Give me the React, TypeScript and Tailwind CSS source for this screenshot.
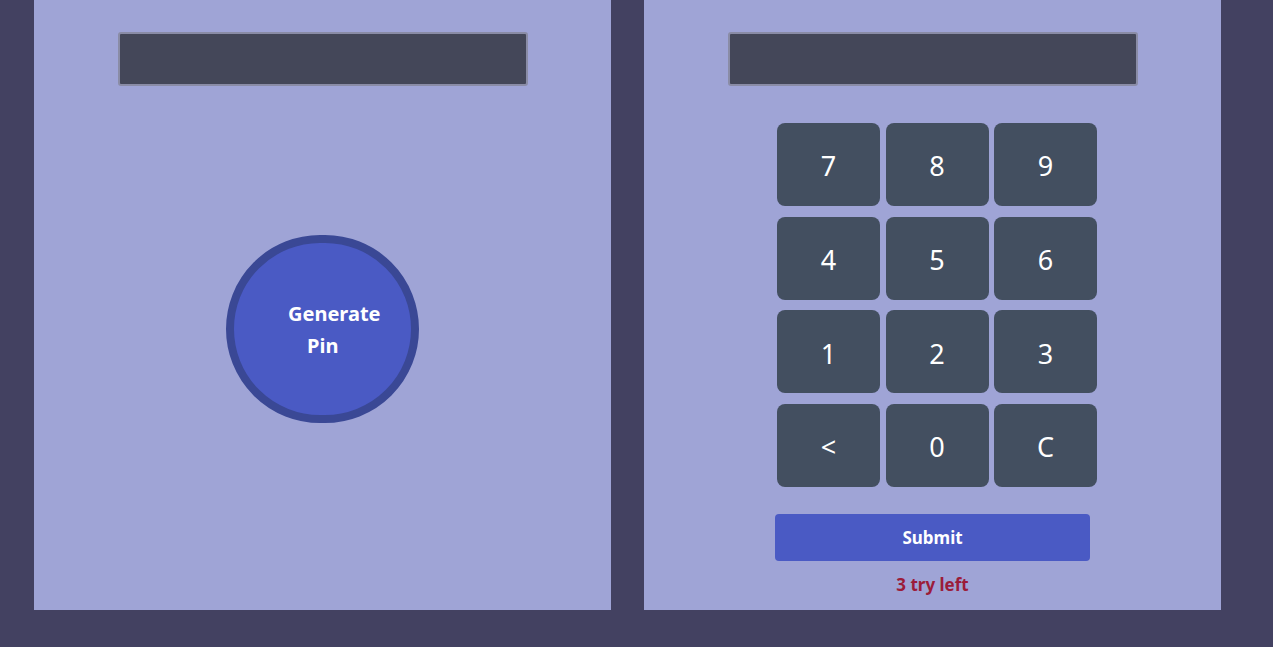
import React from "react";

const keys = ["7", "8", "9", "4", "5", "6", "1", "2", "3", "<", "0", "C"];

export default function App() {
  return (
    <div
      className="w-[1273px] h-[647px] bg-[#434161] flex items-start gap-[33px] pl-[34px]"
      style={{ fontFamily: '"Noto Sans", "Open Sans", sans-serif' }}
    >
      <div className="w-[577px] h-[610px] bg-[#9fa4d6] flex flex-col items-center pt-[32px]">
        <div className="w-[410px] h-[54px] bg-[#444759] border-2 border-[#8a8ca6] rounded-[3px]" />
        <div className="mt-[149px] w-[193px] h-[188px] rounded-full border-[8px] border-[#3a4895] bg-[#4a5ac4] flex flex-col justify-center text-white font-bold text-[20px] leading-[32px]">
          <span className="pl-[54px] mt-[1px]">Generate</span>
          <span className="pl-[73px]">Pin</span>
        </div>
      </div>
      <div className="w-[577px] h-[610px] bg-[#9fa4d6] flex flex-col items-center pt-[32px]">
        <div className="w-[410px] h-[54px] bg-[#444759] border-2 border-[#8a8ca6] rounded-[3px]" />
        <div className="mt-[37px] ml-[9px] grid grid-cols-[103px_103px_103px] gap-x-[5.5px] gap-y-[10.67px]">
          {keys.map((k) => (
            <div
              key={k}
              className="h-[83px] pt-[4px] rounded-[8px] bg-[#434f60] flex items-center justify-center text-white text-[27px]"
            >
              {k}
            </div>
          ))}
        </div>
        <div className="mt-[27px] w-[315px] h-[47px] rounded-[4px] bg-[#4a5ac4] flex items-center justify-center text-white font-bold text-[17px]">
          Submit
        </div>
        <div className="mt-[11px] text-[#9b1c3a] font-bold text-[17px]">3 try left</div>
      </div>
    </div>
  );
}
